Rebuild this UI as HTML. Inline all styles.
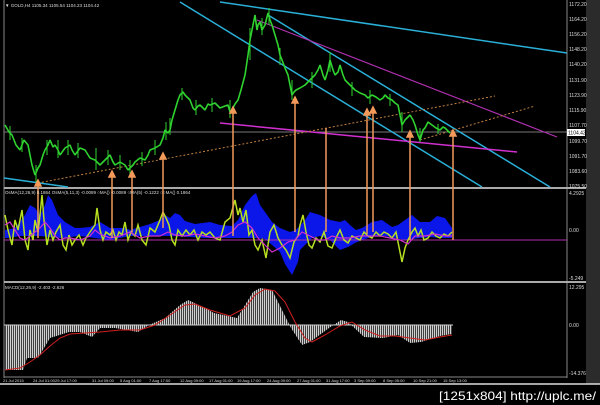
<!DOCTYPE html>
<html><head><meta charset="utf-8"><style>
html,body{margin:0;padding:0;background:#000;width:600px;height:405px;overflow:hidden}
svg{display:block}
text{font-family:"Liberation Sans",sans-serif}
</style></head><body>
<svg width="600" height="405" viewBox="0 0 600 405" xmlns="http://www.w3.org/2000/svg">
<defs>
<pattern id="hs" width="2" height="4" patternUnits="userSpaceOnUse"><rect x="0" y="0" width="1.3" height="4" fill="#d0d0d0"/></pattern>
</defs>
<rect width="600" height="405" fill="#000"/>
<rect x="586" y="0" width="14" height="384" fill="#2b2b2b"/>
<line x1="4" y1="0" x2="4" y2="378" stroke="#888" stroke-width="1"/>
<line x1="567" y1="0" x2="567" y2="378" stroke="#888" stroke-width="1"/>
<line x1="4" y1="188" x2="586" y2="188" stroke="#aaa" stroke-width="2"/>
<line x1="4" y1="282" x2="586" y2="282" stroke="#aaa" stroke-width="2"/>
<line x1="4" y1="377" x2="567" y2="377" stroke="#888" stroke-width="1"/>
<line x1="0" y1="384" x2="600" y2="384" stroke="#ddd" stroke-width="1.5"/>

<line x1="4" y1="132" x2="567" y2="132" stroke="#777" stroke-width="1"/>
<line x1="220" y1="2" x2="567" y2="53" stroke="#2ab0d8" stroke-width="1.5"/>
<line x1="180" y1="2" x2="482" y2="187" stroke="#2ab0d8" stroke-width="1.5"/>
<line x1="268" y1="15" x2="550" y2="187" stroke="#2ab0d8" stroke-width="1.5"/>
<line x1="4" y1="178" x2="68" y2="187" stroke="#2ab0d8" stroke-width="1.5"/>
<line x1="257" y1="20" x2="557" y2="137" stroke="#b030b0" stroke-width="1.2"/>
<line x1="220" y1="123" x2="517" y2="152" stroke="#d030d0" stroke-width="1.5"/>
<line x1="38" y1="183" x2="495" y2="96" stroke="#c08040" stroke-width="1" stroke-dasharray="2,2"/>
<line x1="420" y1="140" x2="535" y2="106" stroke="#c08040" stroke-width="1" stroke-dasharray="2,2"/>

<polyline fill="none" stroke="#2fd22f" stroke-width="1.6" stroke-linejoin="bevel" points="5,125 9,132 12,135 16,145 20,150 24,140 28,145 32,165 35,175 38,168 40,165 43,155 45,150 48,145 50,140 53,147 55,145 58,150 60,155 65,148 70,145 72,150 75,155 80,148 85,150 90,158 95,160 98,163 100,165 105,160 110,155 113,162 115,165 120,162 125,165 128,170 130,168 133,165 135,162 140,158 145,160 148,155 150,150 155,148 160,145 163,138 165,130 168,133 170,130 172,120 175,110 178,100 180,95 183,92 185,95 188,98 190,100 193,108 195,110 198,106 200,105 203,108 205,110 208,104 210,105 215,103 220,108 225,106 228,105 230,112 232,110 235,104 238,100 241,90 245,75 248,55 250,40 253,25 255,15 257,30 258,25 260,22 262,30 265,25 268,13 270,20 272,25 275,35 278,45 280,55 282,60 285,68 288,75 290,85 292,95 294,92 296,90 300,88 305,85 310,80 315,75 318,70 320,65 323,75 325,80 328,70 330,60 333,70 335,75 338,72 340,65 343,75 345,80 350,85 355,90 360,93 365,95 368,98 372,95 376,97 380,100 383,98 385,95 388,98 392,100 395,103 398,105 400,115 402,125 405,120 410,115 413,120 415,125 418,135 420,140 423,130 425,128 428,122 432,125 436,128 440,130 443,127 445,128 448,131 450,133"/>
<g stroke="#2fd22f" stroke-width="1">
<line x1="10" y1="126" x2="10" y2="140"/><line x1="22" y1="138" x2="22" y2="152"/><line x1="36" y1="165" x2="36" y2="182"/><line x1="47" y1="140" x2="47" y2="155"/><line x1="58" y1="140" x2="58" y2="158"/><line x1="68" y1="140" x2="68" y2="155"/><line x1="78" y1="143" x2="78" y2="158"/><line x1="96" y1="148" x2="96" y2="170"/><line x1="108" y1="150" x2="108" y2="165"/><line x1="120" y1="155" x2="120" y2="170"/><line x1="130" y1="160" x2="130" y2="174"/><line x1="142" y1="152" x2="142" y2="166"/><line x1="155" y1="140" x2="155" y2="155"/><line x1="166" y1="122" x2="166" y2="140"/><line x1="170" y1="118" x2="170" y2="135"/><line x1="182" y1="88" x2="182" y2="100"/><line x1="196" y1="100" x2="196" y2="115"/><line x1="212" y1="98" x2="212" y2="112"/><line x1="230" y1="100" x2="230" y2="118"/><line x1="250" y1="28" x2="250" y2="60"/><line x1="262" y1="18" x2="262" y2="35"/><line x1="269" y1="8" x2="269" y2="25"/><line x1="280" y1="48" x2="280" y2="65"/><line x1="292" y1="80" x2="292" y2="100"/><line x1="312" y1="72" x2="312" y2="88"/><line x1="330" y1="52" x2="330" y2="72"/><line x1="352" y1="82" x2="352" y2="96"/><line x1="370" y1="90" x2="370" y2="104"/><line x1="390" y1="94" x2="390" y2="106"/><line x1="402" y1="112" x2="402" y2="132"/><line x1="420" y1="128" x2="420" y2="142"/><line x1="438" y1="124" x2="438" y2="134"/>
</g>

<polygon fill="#0b16e8" points="5,230 15,228 25,215 30,205 35,208 40,215 45,205 48,195 52,200 58,215 65,222 75,228 80,228 90,227 100,222 110,228 125,228 130,230 150,224 160,220 165,215 170,218 175,213 180,215 185,221 195,224 210,222 220,225 232,226 238,220 245,205 252,196 256,193 260,205 265,212 272,222 280,228 290,232 296,230 305,220 310,212 320,215 330,220 340,222 345,220 350,225 356,230 362,228 372,222 382,220 392,227 398,225 405,220 412,215 420,222 430,222 437,216 445,218 452,228 452,238 440,238 430,237 420,238 405,240 395,238 385,236 375,236 362,240 355,243 348,247 340,250 330,240 320,236 312,238 300,250 298,262 292,275 285,264 280,252 272,245 265,239 255,238 245,238 232,238 220,238 205,238 190,237 170,236 150,236 130,236 110,240 95,238 80,236 60,238 40,236 20,236 8,238 5,238"/>
<line x1="4" y1="240" x2="567" y2="240" stroke="#b030b0" stroke-width="1"/>
<polyline fill="none" stroke="#b7e020" stroke-width="1.5" points="5,215 8,230 12,245 15,220 18,230 22,210 25,240 28,250 30,230 33,240 35,220 38,232 40,215 42,195 44,220 47,245 50,230 53,240 56,232 60,225 63,245 66,250 69,235 72,245 75,240 79,235 83,245 86,238 90,232 95,225 97,208 100,230 103,240 106,232 110,235 113,230 116,240 119,232 122,235 125,222 128,240 131,232 135,236 138,225 142,240 146,245 150,228 155,232 160,220 163,212 166,218 169,225 172,240 175,245 178,230 182,236 186,230 190,235 194,230 198,240 202,232 206,235 210,232 215,238 220,240 225,222 230,218 235,200 238,215 240,208 243,222 246,210 249,235 252,230 255,245 258,250 262,240 266,258 270,232 274,225 278,238 282,245 286,250 290,258 294,242 298,236 300,225 303,215 306,232 309,245 312,248 316,238 320,242 324,232 328,246 332,248 336,238 340,230 344,240 348,243 352,236 356,238 360,240 364,232 368,236 372,238 376,232 380,236 384,232 388,234 392,238 396,232 400,252 402,262 405,248 408,240 412,232 415,228 418,236 421,230 424,240 428,238 432,232 436,236 440,238 444,234 448,236 452,232"/>
<polyline fill="none" stroke="#d030d0" stroke-width="1.2" points="5,225 10,222 15,230 20,238 25,240 30,236 35,232 40,228 45,222 50,228 55,236 60,240 65,238 70,238 80,240 90,236 95,230 100,234 110,238 120,236 130,232 140,238 150,236 160,236 168,232 175,235 185,236 195,234 205,236 215,238 225,236 232,232 238,225 245,222 252,228 258,238 265,245 272,252 280,248 288,242 295,240 302,232 310,236 318,240 325,240 332,236 340,238 350,238 360,236 370,236 380,236 390,238 400,240 408,244 415,236 425,236 435,234 445,236 452,236"/>

<g stroke="#f39a5a" stroke-width="1.5" fill="#f39a5a">
<line x1="38" y1="186" x2="38" y2="238"/>
<line x1="112" y1="176" x2="112" y2="238"/>
<line x1="132" y1="176" x2="132" y2="232"/>
<line x1="163" y1="158" x2="163" y2="228"/>
<line x1="233" y1="112" x2="233" y2="236"/>
<line x1="295" y1="102" x2="295" y2="232"/>
<line x1="326" y1="128" x2="326" y2="232"/>
<line x1="367" y1="114" x2="367" y2="234"/>
<line x1="373" y1="112" x2="373" y2="232"/>
<line x1="410" y1="136" x2="410" y2="240"/>
<line x1="453" y1="135" x2="453" y2="240"/>
<path d="M35,186 L38,180 L41,186Z M109,177 L112,171 L115,177Z M129,177 L132,171 L135,177Z M160,159 L163,153 L166,159Z M230,113 L233,107 L236,113Z M292,103 L295,97 L298,103Z M364,115 L367,109 L370,115Z M370,113 L373,107 L376,113Z M407,137 L410,131 L413,137Z M450,136 L453,130 L456,136Z"/>
</g>

<polygon fill="url(#hs)" points="5,325 5,370 23,370 27,358 38,358 50,338 69,332 80,332 92,337 100,328 115,328 138,332 149,325 165,318 180,305 188,300 199,305 214,313 237,318 253,292 260,288 272,290 283,312 291,328 302,345 310,342 329,328 341,320 348,322 364,337 383,338 398,335 410,343 421,342 440,336 452,334 452,325"/>
<line x1="4" y1="325" x2="453" y2="325" stroke="#ccc" stroke-width="1"/>
<polyline fill="none" stroke="#d02020" stroke-width="1" points="5,370 20,368 30,362 40,355 50,346 60,338 70,334 85,333 100,332 120,330 140,330 155,325 170,315 185,305 195,304 210,310 230,316 245,308 255,295 265,289 275,291 285,302 295,322 305,338 312,342 325,335 340,326 352,322 365,330 380,336 395,336 410,338 425,340 440,337 452,335"/>

<g fill="#ddd" font-size="5">
<text x="569" y="6">1172.20</text><text x="569" y="21">1164.20</text><text x="569" y="36">1156.20</text><text x="569" y="51">1148.20</text><text x="569" y="66">1140.20</text><text x="569" y="82">1131.90</text><text x="569" y="97">1123.90</text><text x="569" y="112">1115.90</text><text x="569" y="127">1107.70</text><text x="569" y="143">1099.70</text><text x="569" y="158">1091.70</text><text x="569" y="173">1083.60</text><text x="569" y="188">1075.50</text>
<text x="569" y="195">4.2925</text><text x="569" y="232">0.00</text><text x="569" y="280">-5.249</text>
<text x="569" y="289">12.295</text><text x="569" y="327">0.00</text><text x="569" y="375">-14.376</text>
</g>
<rect x="567" y="129" width="18" height="7" fill="#fff"/>
<text x="568" y="134.5" font-size="5" fill="#000">1104.42</text>
<g fill="#ddd" font-size="4.5">
<text x="5" y="7">▼ GOLD,H4  1105.34  1105.54  1104.23  1104.42</text>
<text x="5" y="194">OsMA(12,26,9) 0.1864  OsMA(5,11,3) -0.0089  ○MA() -0.0089  ○MA(5) -0.1222  ○○MA() 0.1864</text>
<text x="5" y="289">MACD(12,26,9) -2.403 -2.626</text>
</g>
<g fill="#ddd" font-size="4">
<text x="3" y="382">21 Jul 2015</text><text x="33" y="382">24 Jul 01:00</text><text x="55" y="382">29 Jul 17:00</text><text x="92" y="382">31 Jul 09:00</text><text x="120" y="382">5 Aug 01:00</text><text x="149" y="382">7 Aug 17:00</text><text x="180" y="382">12 Aug 09:00</text><text x="209" y="382">17 Aug 01:00</text><text x="237" y="382">19 Aug 17:00</text><text x="267" y="382">24 Aug 09:00</text><text x="297" y="382">27 Aug 01:00</text><text x="326" y="382">31 Aug 17:00</text><text x="354" y="382">3 Sep 09:00</text><text x="383" y="382">8 Sep 05:00</text><text x="413" y="382">10 Sep 21:00</text><text x="443" y="382">15 Sep 13:00</text>
</g>
<text x="596" y="400" text-anchor="end" font-size="12" fill="#fff" font-family="Liberation Mono, monospace" textLength="157" lengthAdjust="spacingAndGlyphs">[1251x804] http://uplc.me/</text>
</svg>
</body></html>
